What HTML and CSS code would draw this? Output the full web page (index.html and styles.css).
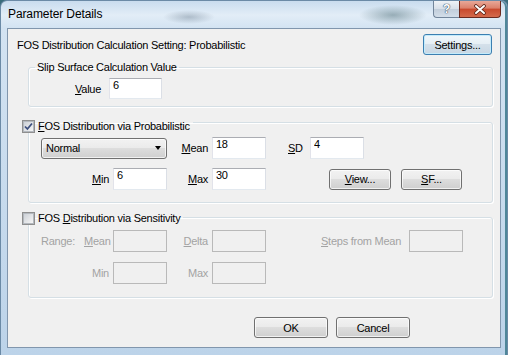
FILE: index.html
```html
<!DOCTYPE html>
<html lang="en">
<head>
    <meta charset="UTF-8">
    <title>Parameter Details</title>
    <link rel="stylesheet" href="styles.css">
</head>
<body>

<div class="window">
    <div class="titlebar">
        <span class="title">Parameter Details</span>
        <div class="caption-buttons">
            <span class="cap-btn help">?</span>
            <span class="cap-btn close">
                <svg width="14" height="11" viewBox="0 0 14 11">
                    <path d="M3 2 L11 9 M11 2 L3 9" stroke="#5a2418" stroke-width="3.6" stroke-linecap="round"/>
                    <path d="M3 2 L11 9 M11 2 L3 9" stroke="#fff" stroke-width="2" stroke-linecap="round"/>
                </svg>
            </span>
        </div>
    </div>

    <div class="client">
        <div class="setting-row">
            <span>FOS Distribution Calculation Setting: Probabilistic</span>
            <button class="btn default settings">Settings...</button>
        </div>

        <fieldset class="group">
            <legend>Slip Surface Calculation Value</legend>
            <div class="value-row">
                <label class="value-label"><u>V</u>alue</label>
                <input class="field" type="text" value="6">
            </div>
        </fieldset>

        <fieldset class="group prob">
            <legend class="check-legend">
                <span class="check checked">
                    <svg width="9" height="9" viewBox="0 0 9 9">
                        <path d="M1 4.5 L3.4 7 L8 1.5" fill="none" stroke="#3d4f7e" stroke-width="1.8"/>
                    </svg>
                </span>
                <span><u>F</u>OS Distribution via Probabilistic</span>
            </legend>
            <div class="fields">
                <div class="combo"><span>Normal</span><span class="arrow"></span></div>
                <label class="lbl"><u>M</u>ean</label>
                <input class="field" type="text" value="18">
                <div class="extra sd">
                    <label class="sd-label"><u>S</u>D</label>
                    <input class="field" type="text" value="4">
                </div>

                <label class="lbl"><u>M</u>in</label>
                <input class="field" type="text" value="6">
                <label class="lbl"><u>M</u>ax</label>
                <input class="field" type="text" value="30">
                <div class="extra actions">
                    <button class="btn view"><u>V</u>iew...</button>
                    <button class="btn sf"><u>S</u>F...</button>
                </div>
            </div>
        </fieldset>

        <fieldset class="group sens">
            <legend class="check-legend">
                <span class="check"></span>
                <span>FOS <u>D</u>istribution via Sensitivity</span>
            </legend>
            <div class="fields disabled">
                <label class="lbl"><span class="range">Range:</span><u>M</u>ean</label>
                <input class="field" type="text" disabled>
                <label class="lbl"><u>D</u>elta</label>
                <input class="field" type="text" disabled>
                <div class="extra steps">
                    <label class="steps-label"><u>S</u>teps from Mean</label>
                    <input class="field" type="text" disabled>
                </div>

                <label class="lbl">Min</label>
                <input class="field" type="text" disabled>
                <label class="lbl">Max</label>
                <input class="field" type="text" disabled>
            </div>
        </fieldset>

        <div class="dialog-buttons">
            <button class="btn">OK</button>
            <button class="btn">Cancel</button>
        </div>
    </div>
</div>

</body>
</html>
```

FILE: styles.css
```css
* {
    box-sizing: border-box;
}

body {
    margin: 0;
    width: 508px;
    height: 355px;
    overflow: hidden;
    background: #3a6c7b;
    font-family: "Liberation Sans", Arial, sans-serif;
    font-size: 11px;
    letter-spacing: -0.25px;
    color: #000;
}

u {
    text-decoration-thickness: 1px;
    text-underline-offset: 1px;
}

/* window frame */
.window {
    height: 355px;
    display: flex;
    flex-direction: column;
    border: 1px solid #6b8aa6;
    border-bottom: none;
    border-radius: 7px 7px 0 0;
    background:
        radial-gradient(ellipse 26px 7px at 188px 16px, rgba(80, 100, 120, 0.35), transparent),
        radial-gradient(ellipse 34px 10px at 392px 14px, rgba(60, 95, 105, 0.45), transparent),
        linear-gradient(to bottom, #c9dcee 0, #e2edf7 14px, #d3e3f2 27px, #bcd3e9 100%);
    box-shadow: inset -2px 0 0 #4f8799;
}

.titlebar {
    height: 27px;
    display: flex;
    align-items: flex-start;
}

.title {
    padding: 6px 0 0 7px;
    font-size: 12px;
    line-height: 15px;
    letter-spacing: -0.1px;
}

.caption-buttons {
    margin-left: auto;
    margin-right: 6px;
    display: flex;
}

.cap-btn {
    height: 17px;
    display: flex;
    align-items: center;
    justify-content: center;
}

.help {
    width: 26px;
    border: 1px solid #72859a;
    border-top: none;
    border-right: none;
    border-radius: 0 0 0 4px;
    background: linear-gradient(#eef2f6, #d7dfe8 50%, #c1cdda 50%, #d3dee9);
    color: #fff;
    font-weight: bold;
    font-size: 12px;
    text-shadow: 0 0 1px #45566a, 0 0 1px #45566a, 0 0 1px #45566a;
}

.close {
    width: 42px;
    border: 1px solid #6b2a1f;
    border-top: none;
    border-radius: 0 0 4px 0;
    background: linear-gradient(#e8a898, #dc806a 45%, #c8492d 50%, #d46a4c);
}

/* client area */
.client {
    flex: 1;
    margin: 0 6px 7px 6px;
    border: 1px solid #8196ad;
    background: #f0f0f0;
    display: flex;
    flex-direction: column;
}

.setting-row {
    display: flex;
    align-items: center;
    justify-content: space-between;
    height: 21px;
    margin-top: 5px;
    padding: 0 8px 0 9px;
}

.btn {
    height: 21px;
    padding: 0;
    font: inherit;
    letter-spacing: inherit;
    color: #000;
    border: 1px solid #707070;
    border-radius: 3px;
    background: linear-gradient(#f2f2f2, #ebebeb 45%, #dddddd 50%, #cfcfcf);
    box-shadow: inset 0 0 0 1px rgba(255, 255, 255, 0.7);
}

.btn.default {
    border-color: #3c7fb1;
    background: linear-gradient(#f1f7fb, #e6eff5 45%, #d4e0ea 50%, #c8d7e4);
    box-shadow: inset 0 0 0 1px #c4ebfb;
}

.settings {
    width: 69px;
}

/* group boxes */
.group {
    margin: 5px 7px 0 20px;
    padding: 0;
    min-width: 0;
    border: 1px solid #d5dfe5;
    border-radius: 3px;
    box-shadow: inset 1px 1px 0 #fff, 1px 1px 0 #fff;
}

.group legend {
    margin-left: 6px;
    padding: 0 2px;
    height: 14px;
    line-height: 14px;
}

.group .check-legend {
    margin-left: -7px;
    padding: 0 3px 0 0;
    height: 21px;
    display: flex;
    align-items: flex-end;
    gap: 3px;
    line-height: 13px;
}

.prob {
    margin-top: 5px;
}

.sens {
    margin-top: 7px;
}

.sens .check-legend {
    height: 15px;
}

.check {
    width: 13px;
    height: 13px;
    border: 1px solid #8f8f8f;
    background: #f4f4f4;
    display: flex;
    align-items: center;
    justify-content: center;
    position: relative;
}

.check::before {
    content: "";
    width: 9px;
    height: 9px;
    border: 1px solid #b3b8be;
    background: linear-gradient(135deg, #cdd1d7, #f5f5f5);
}

.check svg {
    position: absolute;
    left: 1px;
    top: 1px;
}

.value-row {
    display: flex;
    align-items: center;
    margin: 4px 0 7px 46px;
}

.value-label {
    width: 34px;
}

.field {
    width: 54px;
    height: 22px;
    padding: 1px 3px 9px;
    font: inherit;
    letter-spacing: inherit;
    color: #000;
    background: #fff;
    border: 1px solid;
    border-color: #abadb3 #dbdfe6 #e3e9ef #e2e3ea;
    border-radius: 0;
    outline: none;
}

.value-row .field {
    width: 53px;
    height: 21px;
}

.fields {
    display: grid;
    grid-template-columns: 72px 54px 45px 54px auto;
    grid-auto-rows: 22px;
    row-gap: 9px;
    align-items: center;
    margin: 4px 0 12px 12px;
}

.fields .lbl {
    text-align: right;
    padding-right: 4px;
}

.combo {
    grid-column: span 2;
    height: 21px;
    display: flex;
    align-items: center;
    justify-content: space-between;
    padding: 0 5px 0 4px;
    border: 1px solid #707070;
    border-radius: 3px;
    background: linear-gradient(#f2f2f2, #ebebeb 45%, #dddddd 50%, #cfcfcf);
    box-shadow: inset 0 0 0 1px rgba(255, 255, 255, 0.7);
}

.arrow {
    border-left: 3.5px solid transparent;
    border-right: 3.5px solid transparent;
    border-top: 4px solid #000;
}

.extra {
    display: flex;
    align-items: center;
}

.sd {
    padding-left: 22px;
}

.sd-label {
    width: 22px;
}

.actions {
    padding-left: 63px;
    gap: 10px;
}

.view {
    width: 62px;
}

.sf {
    width: 61px;
}

.sens .fields {
    row-gap: 10px;
    margin: 5px 0 13px 12px;
}

.disabled {
    color: #a3a3a3;
}

.disabled .field {
    background: #f0f0f0;
    border-color: #b9b9b9;
}

.range {
    margin-right: 9px;
}

.steps {
    padding-left: 55px;
}

.steps-label {
    width: 88px;
}

.dialog-buttons {
    display: flex;
    justify-content: flex-end;
    gap: 8px;
    margin-top: 19px;
    padding-right: 90px;
}

.dialog-buttons .btn {
    width: 74px;
}
```
